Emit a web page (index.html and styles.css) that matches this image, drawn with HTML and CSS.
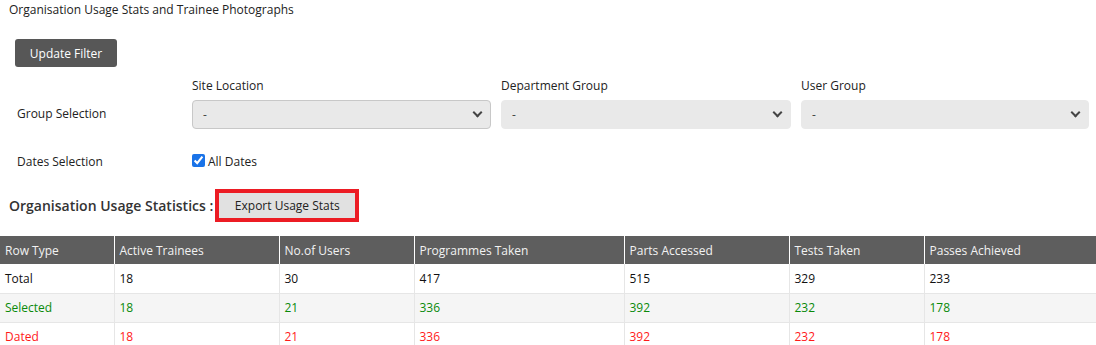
FILE: index.html
```html
<!DOCTYPE html>
<html lang="en">
<head>
    <meta charset="UTF-8">
    <title>Organisation Usage Stats</title>
    <link rel="stylesheet" href="styles.css">
</head>
<body>

    <div class="page-title">Organisation Usage Stats and Trainee Photographs</div>

    <div class="filter-bar">
        <button class="btn-dark">Update Filter</button>
    </div>

    <div class="filters">
        <div class="cell"></div>
        <div class="field-label">Site Location</div>
        <div class="field-label">Department Group</div>
        <div class="field-label">User Group</div>

        <div class="row-label">Group Selection</div>
        <div class="select first"><span>-</span><i class="chev"></i></div>
        <div class="select"><span>-</span><i class="chev"></i></div>
        <div class="select"><span>-</span><i class="chev"></i></div>
    </div>

    <div class="dates">
        <div class="row-label">Dates Selection</div>
        <label class="check"><input type="checkbox" checked> All Dates</label>
    </div>

    <div class="stats-head">
        <h3>Organisation Usage Statistics :</h3>
        <div class="highlight">
            <button class="btn-light">Export Usage Stats</button>
        </div>
    </div>

    <table class="stats">
        <colgroup>
            <col style="width:114px">
            <col style="width:165px">
            <col style="width:135px">
            <col style="width:210px">
            <col style="width:165px">
            <col style="width:135px">
            <col>
        </colgroup>
        <thead>
            <tr>
                <th>Row Type</th>
                <th>Active Trainees</th>
                <th>No.of Users</th>
                <th>Programmes Taken</th>
                <th>Parts Accessed</th>
                <th>Tests Taken</th>
                <th>Passes Achieved</th>
            </tr>
        </thead>
        <tbody>
            <tr>
                <td>Total</td><td>18</td><td>30</td><td>417</td><td>515</td><td>329</td><td>233</td>
            </tr>
            <tr class="selected">
                <td>Selected</td><td>18</td><td>21</td><td>336</td><td>392</td><td>232</td><td>178</td>
            </tr>
            <tr class="dated">
                <td>Dated</td><td>18</td><td>21</td><td>336</td><td>392</td><td>232</td><td>178</td>
            </tr>
        </tbody>
    </table>

</body>
</html>
```

FILE: styles.css
```css
* {
    margin: 0;
    padding: 0;
    box-sizing: border-box;
}
body {
    font-family: "Open Sans", "Liberation Sans", sans-serif;
    font-size: 12px;
    color: #222;
    background: #fff;
    width: 1096px;
    overflow: hidden;
}
.page-title {
    padding-left: 9px;
    line-height: 20px;
    color: #222;
}
.filter-bar {
    padding: 19px 0 0 15px;
}
.btn-dark {
    font-family: inherit;
    font-size: 12px;
    font-weight: 500;
    color: #fff;
    background: #575757;
    border: none;
    border-radius: 3px;
    width: 102px;
    height: 28px;
}
.filters {
    display: grid;
    grid-template-columns: 165px 299px 290px 288px;
    column-gap: 10px;
    padding: 9px 0 0 17px;
}
.filters .field-label {
    line-height: 20px;
    margin-bottom: 4px;
}
.row-label {
    display: flex;
    align-items: center;
}
.filters .row-label {
    padding-bottom: 3px;
}
.select {
    height: 29px;
    background: #e9e9e9;
    border: 1px solid #e9e9e9;
    border-radius: 4px;
    display: flex;
    align-items: center;
    justify-content: space-between;
    padding: 0 9px 0 10px;
    color: #444;
}
.select.first {
    border-color: #c8c8c8;
}
.chev {
    width: 7px;
    height: 7px;
    border-right: 2px solid #444;
    border-bottom: 2px solid #444;
    transform: rotate(45deg);
    margin-top: -4px;
}
.dates {
    display: grid;
    grid-template-columns: 175px auto;
    padding: 23px 0 0 17px;
    line-height: 20px;
}
.check {
    display: flex;
    align-items: center;
}
.check input {
    width: 13px;
    height: 13px;
    margin: -3px 3px 0 0;
    accent-color: #1a73e8;
}
.stats-head {
    display: flex;
    align-items: center;
    padding: 17px 0 0 9px;
}
.stats-head h3 {
    font-size: 14px;
    font-weight: 600;
    color: #333;
    margin-right: 2px;
}
.highlight {
    border: 4px solid #ec1c24;
    padding: 0;
}
.btn-light {
    font-family: inherit;
    font-size: 12px;
    color: #222;
    background: #e1e1e1;
    border: none;
    width: 136px;
    height: 25px;
    display: block;
}
.stats {
    margin-top: 14px;
    width: 1096px;
    border-collapse: collapse;
    table-layout: fixed;
}
.stats th {
    background: #5e5e5e;
    color: #f2f2f2;
    font-weight: normal;
    text-align: left;
    height: 28px;
    padding: 0 5px;
    border-left: 1px solid #fff;
}
.stats td {
    height: 29px;
    padding: 0 5px;
    border-left: 1px solid #e6e6e6;
    border-bottom: 1px solid #e6e6e6;
    color: #111;
}
.stats th:first-child,
.stats td:first-child {
    border-left: none;
}
.stats tr.selected td {
    background: #f5f5f5;
    color: #0a8a0a;
}
.stats tr.dated td {
    color: #ff1a1a;
}
```
